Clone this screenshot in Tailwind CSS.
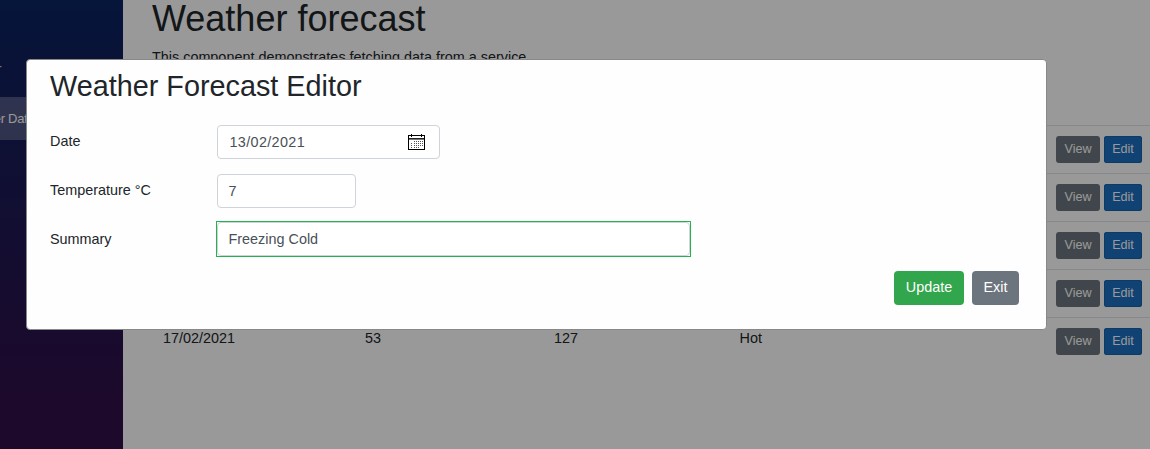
<!DOCTYPE html>
<html lang="en">
<head>
<meta charset="utf-8">
<title>Weather forecast</title>
<script src="https://cdn.jsdelivr.net/npm/@tailwindcss/browser@4"></script>
</head>
<body class="relative h-[449px] w-[1150px] overflow-hidden bg-white font-['Liberation_Sans',Arial,sans-serif] text-[14.4px] leading-[21.6px] text-[#212529]">
<div class="flex h-full">
  <nav class="w-[123px] shrink-0 overflow-hidden bg-linear-to-b/srgb from-[#0a2361] to-[#2f1049] to-88% text-[13px] text-[#d7d7d7]">
    <div class="mt-[47px] flex h-[43px] items-center"><span class="flex w-[1.5px] justify-end overflow-hidden whitespace-nowrap">Counter</span></div>
    <div class="mt-[7px] flex h-[43px] items-center bg-white/25 text-white"><span class="-ml-[42px] whitespace-nowrap tracking-[-0.3px]">Weather Data</span></div>
  </nav>
  <main class="min-w-0 flex-1">
    <div class="pl-[29px]">
      <h1 class="-mt-[3px] h-[43px] text-[36px] leading-[43px]">Weather forecast</h1>
      <p class="mt-[7px]">This component demonstrates fetching data from a service.</p>
    </div>
    <table class="ml-[29px] mt-[14px] w-[1001px] table-fixed border-collapse text-left">
      <colgroup><col class="w-[202px]"><col class="w-[189px]"><col class="w-[185.5px]"><col><col class="w-[105px]"></colgroup>
      <thead><tr class="h-[43px]"><th colspan="5"></th></tr></thead>
      <tbody>
        <tr class="h-12 border-t border-[#dee2e6] align-top"><td colspan="4"></td><td class="pt-[10px]"><div class="flex justify-end gap-1 pr-[11px] text-[12.6px] leading-[26px] text-white"><span class="h-[27px] w-11 rounded-[3px] bg-[#6c757d] text-center">View</span><span class="h-[27px] w-[38px] rounded-[3px] bg-[#1b6ec2] text-center shadow-[inset_0_0_0_1px_#1861ac]">Edit</span></div></td></tr>
        <tr class="h-12 border-t border-[#dee2e6] align-top"><td colspan="4"></td><td class="pt-[10px]"><div class="flex justify-end gap-1 pr-[11px] text-[12.6px] leading-[26px] text-white"><span class="h-[27px] w-11 rounded-[3px] bg-[#6c757d] text-center">View</span><span class="h-[27px] w-[38px] rounded-[3px] bg-[#1b6ec2] text-center shadow-[inset_0_0_0_1px_#1861ac]">Edit</span></div></td></tr>
        <tr class="h-12 border-t border-[#dee2e6] align-top"><td colspan="4"></td><td class="pt-[10px]"><div class="flex justify-end gap-1 pr-[11px] text-[12.6px] leading-[26px] text-white"><span class="h-[27px] w-11 rounded-[3px] bg-[#6c757d] text-center">View</span><span class="h-[27px] w-[38px] rounded-[3px] bg-[#1b6ec2] text-center shadow-[inset_0_0_0_1px_#1861ac]">Edit</span></div></td></tr>
        <tr class="h-12 border-t border-[#dee2e6] align-top"><td colspan="4"></td><td class="pt-[10px]"><div class="flex justify-end gap-1 pr-[11px] text-[12.6px] leading-[26px] text-white"><span class="h-[27px] w-11 rounded-[3px] bg-[#6c757d] text-center">View</span><span class="h-[27px] w-[38px] rounded-[3px] bg-[#1b6ec2] text-center shadow-[inset_0_0_0_1px_#1861ac]">Edit</span></div></td></tr>
        <tr class="h-12 border-t border-[#dee2e6] align-top"><td class="pl-[11px] pt-[10px]">17/02/2021</td><td class="pl-[11px] pt-[10px]">53</td><td class="pl-[11px] pt-[10px]">127</td><td class="pl-[11px] pt-[10px]">Hot</td><td class="pt-[10px]"><div class="flex justify-end gap-1 pr-[11px] text-[12.6px] leading-[26px] text-white"><span class="h-[27px] w-11 rounded-[3px] bg-[#6c757d] text-center">View</span><span class="h-[27px] w-[38px] rounded-[3px] bg-[#1b6ec2] text-center shadow-[inset_0_0_0_1px_#1861ac]">Edit</span></div></td></tr>
      </tbody>
    </table>
  </main>
</div>
<div class="absolute inset-0 bg-black/40 pl-[26px] pt-[59px]">
  <section class="flex h-[271px] w-[1021px] flex-col rounded-[4px] border border-[#888] bg-[#fefefe] pl-[23px] pr-[27px]">
    <h2 class="mt-[9px] h-[35px] text-[28.8px] leading-[35px]">Weather Forecast Editor</h2>
    <div class="mt-[21px] flex h-[34px]">
      <label class="w-[167px] pt-[6px]">Date</label>
      <div class="flex w-[223px] items-center justify-between rounded-[4px] border border-[#ced4da] bg-white pl-[11.5px] pr-[14px] text-[#495057]">
        <span class="pt-[2px] tracking-[0.35px]">13/02/2021</span>
        <svg class="h-4 w-[17px]" viewBox="0 0 17 16" shape-rendering="crispEdges"><path d="M0 1h17v15H0zM1 2v13h15V2z" fill="#000" fill-rule="evenodd"/><path d="M1 4h15v1H1z" fill="#222"/><path d="M1 5h15v1H1z" fill="#777"/><path d="M3 0h1v3H3zM13 0h1v3h-1z" fill="#000"/><path d="M6 7h1M8 7h1M10 7h1M12 7h1M14 7h1M3 9h1M6 9h1M8 9h1M10 9h1M12 9h1M14 9h1M3 11h1M6 11h1M8 11h1M10 11h1M12 11h1M14 11h1M3 13h1M6 13h1M8 13h1M10 13h1" transform="translate(0 .5)" stroke="#555"/></svg>
      </div>
    </div>
    <div class="mt-[15px] flex h-[34px]">
      <label class="w-[167px] pt-[6px]">Temperature °C</label>
      <div class="flex w-[139px] items-center rounded-[4px] border border-[#ced4da] bg-white pl-[10.5px] pt-px text-[#495057]">7</div>
    </div>
    <div class="mt-[13px] flex h-[36px]">
      <label class="w-[166px] pt-[8px]">Summary</label>
      <div class="flex w-[475px] border border-[#26b050]">
        <div class="flex flex-1 items-center rounded-[4px] border border-[#ced4da] bg-white pl-[10.5px] pt-px text-[#495057]">Freezing Cold</div>
      </div>
    </div>
    <div class="mt-[14px] flex justify-end gap-2 leading-[32px] text-white">
      <div role="button" class="h-[34px] w-[70px] rounded-[4px] bg-[#32a64c] text-center">Update</div>
      <div role="button" class="h-[34px] w-[47px] rounded-[4px] bg-[#6c757d] text-center">Exit</div>
    </div>
  </section>
</div>
</body>
</html>
